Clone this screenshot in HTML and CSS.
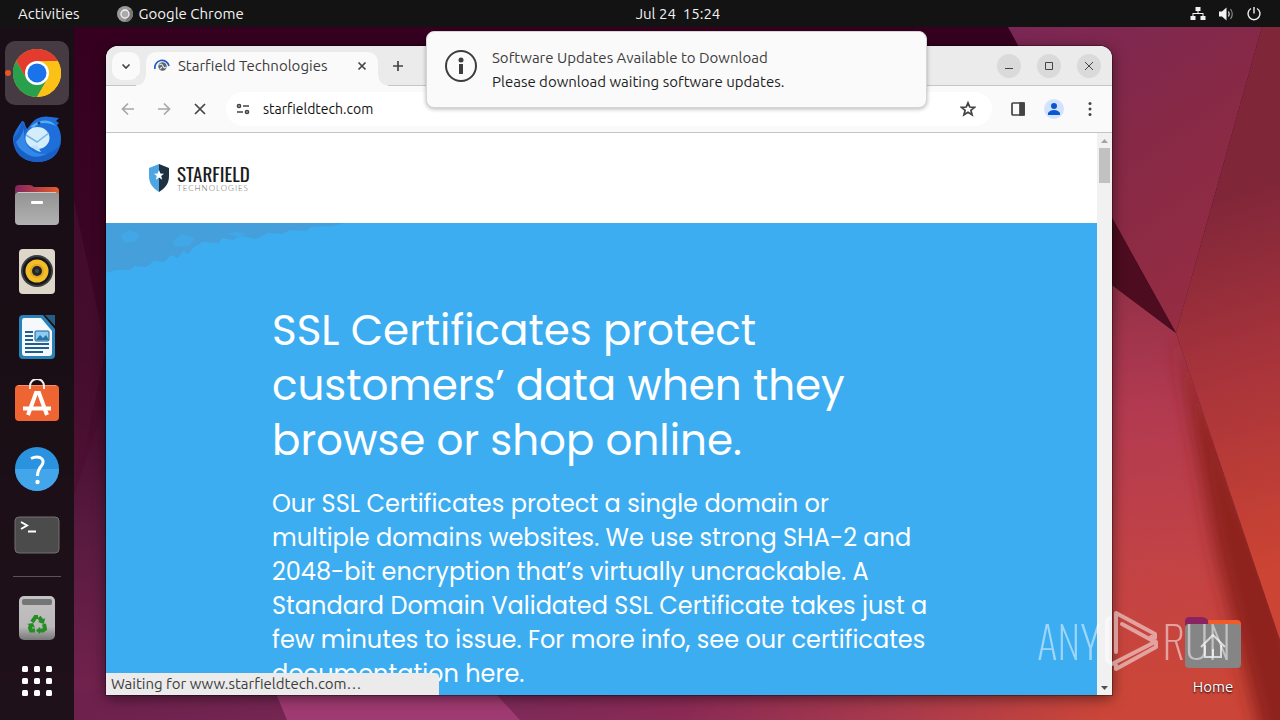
FILE: index.html
```html
<!DOCTYPE html>
<html lang="en">
  <head>
    <meta charset="utf-8" />
    <title>Ubuntu Desktop</title>
    <meta name="viewport" content="width=device-width, initial-scale=1.0" />
    <link rel="stylesheet" href="styles.css">
  </head>

  <body>
    <!-- Wallpaper -->
    <svg class="wallpaper" viewBox="0 0 1280 720" preserveAspectRatio="none" aria-hidden="true">
      <defs>
        <linearGradient id="base" x1="0" y1="0" x2="0" y2="1">
          <stop offset="0" stop-color="#35001f" />
          <stop offset="0.5" stop-color="#3d0827" />
          <stop offset="1" stop-color="#74204c" />
        </linearGradient>
        <linearGradient id="leftEdge" gradientUnits="userSpaceOnUse" x1="0" y1="400" x2="0" y2="720">
          <stop offset="0" stop-color="#440c2d" />
          <stop offset="0.4" stop-color="#581a3f" />
          <stop offset="1" stop-color="#762350" />
        </linearGradient>
        <linearGradient id="floor" gradientUnits="userSpaceOnUse" x1="74" y1="0" x2="1280" y2="0">
          <stop offset="0" stop-color="#6d214c" />
          <stop offset="0.36" stop-color="#7e2a59" />
          <stop offset="0.5" stop-color="#8a2a55" />
          <stop offset="0.68" stop-color="#a83a4c" />
          <stop offset="0.85" stop-color="#c94539" />
          <stop offset="1" stop-color="#a52c18" />
        </linearGradient>
        <linearGradient id="topRight" gradientUnits="userSpaceOnUse" x1="1020" y1="27" x2="1230" y2="330">
          <stop offset="0" stop-color="#7b2755" />
          <stop offset="0.45" stop-color="#872946" />
          <stop offset="1" stop-color="#982d42" />
        </linearGradient>
        <linearGradient id="farRight" gradientUnits="userSpaceOnUse" x1="1190" y1="200" x2="1310" y2="600">
          <stop offset="0" stop-color="#7f2639" />
          <stop offset="0.4" stop-color="#a6333b" />
          <stop offset="0.9" stop-color="#cc4433" />
        </linearGradient>
        <linearGradient id="lower" gradientUnits="userSpaceOnUse" x1="1140" y1="285" x2="1165" y2="690">
          <stop offset="0" stop-color="#943148" />
          <stop offset="0.3" stop-color="#b23a50" />
          <stop offset="0.7" stop-color="#c34345" />
          <stop offset="1" stop-color="#cb4638" />
        </linearGradient>
        <clipPath id="lowerClip">
          <path d="M1100 276 L1176 333 L1280 640 V720 H1100Z" />
        </clipPath>
        <filter id="soft" x="-50%" y="-20%" width="200%" height="140%">
          <feGaussianBlur stdDeviation="9" />
        </filter>
      </defs>
      <rect width="1280" height="720" fill="url(#base)" />
      <path d="M74 200 L106 350 L74 500Z" fill="#4b1233" opacity="0.5" />
      <path d="M74 495 L108 395 V720 H74Z" fill="url(#leftEdge)" />
      <path d="M74 690 H1280 V720 H74Z" fill="url(#floor)" />
      <path d="M262 660 L287 720 H520 L455 650Z" fill="#a03a72" />
      <path d="M1008 27 H1262 L1176 333 L1112 218Z" fill="url(#topRight)" />
      <path d="M1262 27 H1280 V640 L1176 333Z" fill="url(#farRight)" />
      <path d="M1100 276 L1176 333 L1280 640 V720 H1100Z" fill="url(#lower)" />
      <g clip-path="url(#lowerClip)">
        <path d="M1176 333 L1280 590 L1320 740 H1262 L1215 550Z" fill="#8e231b" filter="url(#soft)" />
      </g>
      <path d="M1100 196 L1176 333 L1100 276Z" fill="#4d0c20" />
    </svg>

    <header class="topbar">
      <div class="topbar-left">
        <button class="topbar-button">Activities</button>
        <button class="topbar-button app-menu">
          <svg width="16" height="16" viewBox="0 0 16 16" aria-hidden="true">
            <circle cx="8" cy="8" r="8" fill="#999" />
            <path d="M8 4H15A8 8 0 0 1 8 16L11.5 10Z" fill="#777" />
            <circle cx="8" cy="8" r="4" fill="#aaa" stroke="#f2f2f2" stroke-width="1.3" />
          </svg>
          Google Chrome
        </button>
      </div>
      <button class="topbar-button clock">Jul 24&nbsp; 15:24</button>
      <button class="topbar-button tray" aria-label="System menu">
        <svg width="16" height="16" viewBox="0 0 16 16" fill="#f2f2f2" aria-hidden="true">
          <path d="M5.500 1h5v4h-2v2H13.500v3H15.500v4h-5v-4H12.500v-2H3.500v2H5.500v4H.5v-4H2.500v-3H7.500v-2h-2z" />
        </svg>
        <svg width="16" height="16" viewBox="0 0 16 16" aria-hidden="true">
          <path d="M1 5.500H4L8.500 1.500V14.500L4 10.500H1Z" fill="#f2f2f2" />
          <path d="M10.500 5.500Q12 8 10.500 10.500" fill="none" stroke="#f2f2f2" stroke-width="1.200" />
          <path d="M12.500 3Q16 8 12.500 13" fill="none" stroke="#888" stroke-width="1.200" />
        </svg>
        <svg width="16" height="16" viewBox="0 0 16 16" fill="none" stroke="#f2f2f2" stroke-width="1.400" aria-hidden="true">
          <path d="M5 2.500A6 6 0 1 0 11 2.500M8 1V7.500" />
        </svg>
      </button>
    </header>

    <div class="desktop">
      <nav class="dock" aria-label="Dock">
        <button class="dock-item active" aria-label="Google Chrome">
          <svg width="48" height="48" viewBox="0 0 48 48">
            <circle cx="24" cy="24" r="24" fill="#fbc116" />
            <path d="M3.200 12A24 24 0 0 1 44.800 12H24L13.600 30Z" fill="#e33b2e" />
            <path d="M3.200 12A24 24 0 0 0 24 48L34.400 30H24L13.600 30Z" fill="#29a04b" />
            <path d="M24 12H44.800A24 24 0 0 1 24 48L34.400 30Z" fill="#fbc116" />
            <circle cx="24" cy="24" r="12" fill="#fff" />
            <circle cx="24" cy="24" r="9.500" fill="#1a73e8" />
          </svg>
        </button>
        <button class="dock-item" aria-label="Thunderbird">
          <svg width="48" height="48" viewBox="0 0 48 48">
            <path d="M18 9C22 3 30 0 38 2L46 3L43 6L46 8L44 10C48 16 49 24 47 31C44 42 35 47 25 47C10 47 0 38 0 23C1 17 5 12 9 6C11 6 12 8 12 10L14 14Z" fill="#1e6fd9" />
            <path d="M1 22C0 38 10 47 25 47C38 47 46 38 48 27C43 38 31 41 21 38C9 34 8 22 13 14L9 6Q7 19 1 22Z" fill="#195fc6" />
            <path d="M3 27Q9 21 11 13Q10 28 17 34Q25 41 35 38Q22 46 11 37Q5 33 3 27Z" fill="#3389e8" />
            <path d="M17 12C25 4 37 3 43 11C32 6 25 8 21 13Z" fill="#55acf7" />
            <ellipse cx="24.500" cy="23" rx="12" ry="11" fill="#d3edfc" />
            <path d="M13 20L24 27L36 18" fill="none" stroke="#76b5e1" stroke-width="1.500" />
            <path d="M18 31Q22 36 28 37L24 30Z" fill="#bfe2f8" />
            <circle cx="26" cy="8" r="1.500" fill="#163f86" />
          </svg>
        </button>
        <button class="dock-item" aria-label="Files">
          <svg width="48" height="48" viewBox="0 0 48 48">
            <defs>
              <linearGradient id="folderBack"><stop stop-color="#812460" /><stop offset="1" stop-color="#e95b29" /></linearGradient>
              <linearGradient id="folderFront" x2="0" y2="1"><stop stop-color="#929292" /><stop offset="1" stop-color="#b2b2b2" /></linearGradient>
            </defs>
            <path d="M2 8Q2 4 6 4H16Q19 4 21 6H42Q46 6 46 10V24H2Z" fill="url(#folderBack)" />
            <rect x="2" y="11" width="44" height="33" rx="4" fill="url(#folderFront)" />
            <path d="M5 11.500H43" stroke="#c8c8c8" />
            <rect x="18" y="20" width="12" height="3" rx="1" fill="#fff" />
          </svg>
        </button>
        <button class="dock-item" aria-label="Rhythmbox">
          <svg width="48" height="48" viewBox="0 0 48 48">
            <rect x="6" y="2" width="36" height="45" rx="4" fill="#ddd7ca" />
            <circle cx="24" cy="24" r="16" fill="#3b3c42" />
            <circle cx="24" cy="24" r="14" fill="#15171d" />
            <circle cx="24" cy="24" r="11.500" fill="#f2bd26" />
            <circle cx="24" cy="24" r="7" fill="#dba822" />
            <circle cx="24" cy="24" r="5" fill="#22242a" />
            <circle cx="24" cy="24" r="2" fill="#44464f" />
          </svg>
        </button>
        <button class="dock-item" aria-label="LibreOffice Writer">
          <svg width="48" height="48" viewBox="0 0 48 48">
            <path d="M10 2H30L42 16V42Q42 46 38 46H10Q6 46 6 42V6Q6 2 10 2Z" fill="#2982b7" />
            <path d="M11 5H28L39 18V40Q39 43 36 43H12Q9 43 9 40V8Q9 5 11 5Z" fill="#f5f9fc" />
            <path d="M32 2H42V13Z" fill="#245d86" />
            <path d="M12 19H20M12 23H20M12 27H20M12 31H36M12 35H36M12 39H30" stroke="#205f91" stroke-width="2" />
            <rect x="22" y="18" width="14" height="10" rx="1" fill="#8dccf0" stroke="#205f91" />
            <path d="M23 27L27 22L30 25L33 22L36 27Z" fill="#2674a8" />
          </svg>
        </button>
        <button class="dock-item" aria-label="Ubuntu Software">
          <svg width="48" height="48" viewBox="0 0 48 48">
            <rect x="2" y="6" width="44" height="36" rx="4" fill="#ee6533" />
            <path d="M5 6.500H43" stroke="#fa9069" />
            <path d="M17 10V7A7 7 0 0 1 31 7V10" fill="none" stroke="#f8eee9" stroke-width="2" />
            <path d="M15 36L23 14H26L34 36" fill="none" stroke="#fff" stroke-width="4" />
            <path d="M10 29.500H38" stroke="#fff" stroke-width="4" />
          </svg>
        </button>
        <button class="dock-item" aria-label="Help">
          <svg width="48" height="48" viewBox="0 0 48 48">
            <circle cx="24" cy="24" r="22" fill="#2b92e0" />
            <path d="M2 24A22 22 0 0 0 46 24Z" fill="#43a6ea" />
            <path d="M18 13.500Q23 11 27 12.500Q32 15 29 20Q24.500 25 24.500 31" fill="none" stroke="#fff" stroke-width="3" />
            <circle cx="24.500" cy="37" r="2.200" fill="#fff" />
          </svg>
        </button>
        <button class="dock-item" aria-label="Terminal">
          <svg width="48" height="48" viewBox="0 0 48 48">
            <rect x="2" y="6" width="44" height="36" rx="4" fill="#4b4b4b" stroke="#707070" />
            <path d="M8 11L14 14.500L8 18M15 20.500H23" fill="none" stroke="#fff" stroke-width="2" />
          </svg>
        </button>
        <hr class="dock-divider" />
        <button class="dock-item" aria-label="Trash">
          <svg width="48" height="48" viewBox="0 0 48 48">
            <defs><linearGradient id="bin" x2="0" y2="1"><stop stop-color="#c3c2c2" /><stop offset="0.7" stop-color="#bab8b8" /><stop offset="1" stop-color="#777" /></linearGradient></defs>
            <rect x="6" y="2" width="36" height="44" rx="5" fill="url(#bin)" />
            <rect x="9" y="5" width="30" height="6" rx="2" fill="#757575" />
            <g fill="none" stroke="#248d24" stroke-width="4">
              <path d="M19 28L22.500 23H25" /><path d="M26 23L29.500 28" />
              <path d="M31 30L32 35L30 36.500H26" /><path d="M22 36.500H18L17 34L18 31" />
            </g>
            <path d="M32 24L31 30L25 28ZM27 33V40L23 36.500ZM14 30L20 29L22 34Z" fill="#248d24" />
          </svg>
        </button>
        <button class="dock-item apps" aria-label="Show Applications">
          <svg width="32" height="32" viewBox="0 0 32 32" fill="#fff">
            <rect x="1" y="1" width="6" height="6" rx="1.500" /><rect x="13" y="1" width="6" height="6" rx="1.500" /><rect x="25" y="1" width="6" height="6" rx="1.500" />
            <rect x="1" y="13" width="6" height="6" rx="1.500" /><rect x="13" y="13" width="6" height="6" rx="1.500" /><rect x="25" y="13" width="6" height="6" rx="1.500" />
            <rect x="1" y="25" width="6" height="6" rx="1.500" /><rect x="13" y="25" width="6" height="6" rx="1.500" /><rect x="25" y="25" width="6" height="6" rx="1.500" />
          </svg>
        </button>
      </nav>

      <main class="workspace">
        <button class="home-icon">
          <svg width="56" height="54" viewBox="0 0 56 54" aria-hidden="true">
            <path d="M0 5Q0 1 4 1H17Q21 1 23 4H52Q56 4 56 8V25H0Z" fill="#f15b2a" />
            <path d="M0 5Q0 1 4 1H17Q21 1 23 4L24 20H0Z" fill="#8a2360" />
            <rect y="8" width="56" height="44" rx="4" fill="#858585" />
            <path d="M16 31L28 19L40 31M20 29V41H36V29M28 41V33" fill="none" stroke="#d9d9d9" stroke-width="2" />
          </svg>
          Home
        </button>

        <section class="window" aria-label="Starfield Technologies - Google Chrome">
          <div class="titlebar">
            <button class="tab-search" aria-label="Search tabs">
              <svg width="16" height="16" viewBox="0 0 16 16"><path d="M4.500 6.500L8 10L11.500 6.500" /></svg>
            </button>
            <div class="tab">
              <svg class="spinner" width="16" height="16" viewBox="0 0 16 16" aria-hidden="true">
                <path d="M1 11A7 7 0 1 1 15 8" stroke="#2458c5" />
                <circle cx="8.500" cy="8.500" r="4.200" fill="#5d6470" stroke="none" />
                <path d="M5.500 7Q8 5 9 8T12 9M6 11L8 9" stroke="#dfe3e8" stroke-width="1.200" />
              </svg>
              <span class="tab-title">Starfield Technologies</span>
              <button class="icon-button small" aria-label="Close tab">
                <svg width="16" height="16" viewBox="0 0 16 16"><path d="M4.500 4.500L11.500 11.500M11.500 4.500L4.500 11.500" /></svg>
              </button>
            </div>
            <button class="icon-button new-tab" aria-label="New tab">
              <svg width="16" height="16" viewBox="0 0 16 16"><path d="M8 3V13M3 8H13" /></svg>
            </button>
            <div class="window-controls">
              <button aria-label="Minimize"><svg width="16" height="16" viewBox="0 0 16 16"><path d="M4 10.500H12" /></svg></button>
              <button aria-label="Maximize"><svg width="16" height="16" viewBox="0 0 16 16"><path d="M4.500 4.500H11.500V11.500H4.500Z" /></svg></button>
              <button aria-label="Close"><svg width="16" height="16" viewBox="0 0 16 16"><path d="M4 4L12 12M12 4L4 12" /></svg></button>
            </div>
          </div>

          <div class="toolbar">
            <button class="icon-button muted" aria-label="Back">
              <svg width="16" height="16" viewBox="0 0 16 16"><path d="M14 8H3M8 2.500L2.500 8L8 13.500" /></svg>
            </button>
            <button class="icon-button muted" aria-label="Forward">
              <svg width="16" height="16" viewBox="0 0 16 16"><path d="M2 8H13M8 2.500L13.500 8L8 13.500" /></svg>
            </button>
            <button class="icon-button" aria-label="Stop loading">
              <svg width="16" height="16" viewBox="0 0 16 16"><path d="M3 3L13 13M13 3L3 13" /></svg>
            </button>
            <div class="omnibox">
              <button class="icon-button small" aria-label="View site information">
                <svg width="16" height="16" viewBox="0 0 16 16"><circle cx="4" cy="5" r="1.500" /><path d="M8 5H14M2 11H8" /><circle cx="12" cy="11" r="1.500" /></svg>
              </button>
              <input class="url" type="text" aria-label="Address" value="starfieldtech.com" />
              <button class="icon-button small" aria-label="Bookmark this tab">
                <svg width="16" height="16" viewBox="0 0 16 16"><path d="M8 1.800L9.800 6L14.500 6.300L10.900 9.300L12.100 13.800L8 11.300L3.900 13.800L5.100 9.300L1.500 6.300L6.200 6Z" /></svg>
              </button>
            </div>
            <div class="toolbar-end">
              <button class="icon-button small" aria-label="Side panel">
                <svg width="16" height="16" viewBox="0 0 16 16"><rect x="2" y="2" width="12" height="12" rx="1" /><path d="M10 2H14V14H10Z" fill="#444" /></svg>
              </button>
              <button class="icon-button small profile" aria-label="You">
                <svg width="20" height="20" viewBox="0 0 20 20"><circle cx="10" cy="10" r="10" fill="#d3e3fd" /><circle cx="10" cy="7" r="3" fill="#0b57d0" /><path d="M4 16V14Q6 11 10 11T16 14V16Z" fill="#0b57d0" /></svg>
              </button>
              <button class="icon-button small" aria-label="Menu">
                <svg class="dots" width="16" height="16" viewBox="0 0 16 16"><circle cx="8" cy="2.500" r="1.500" /><circle cx="8" cy="8" r="1.500" /><circle cx="8" cy="13.500" r="1.500" /></svg>
              </button>
            </div>
          </div>

          <div class="viewport">
            <div class="page">
              <header class="site-header">
                <a class="logo" href="#">
                  <svg width="20" height="28" viewBox="0 0 20 28" aria-hidden="true">
                    <path d="M10 0L0 4V12C0 20 4 24 10 28Z" fill="#4da6e3" />
                    <path d="M10 0L20 4V12C20 20 16 24 10 28Z" fill="#1c3242" />
                    <path d="M10 6L11.400 9.500L15 9.700L12.200 12L13.200 15.700L10 13.600L6.800 15.700L7.800 12L5 9.700L8.600 9.500Z" fill="#fff" />
                  </svg>
                  <span class="logo-text">
                    <span class="logo-name">STARFIELD</span>
                    <span class="logo-sub">TECHNOLOGIES</span>
                  </span>
                </a>
              </header>
              <div class="hero">
                <svg class="brush" width="240" height="52" viewBox="0 0 240 52" aria-hidden="true">
                  <path d="M0 0H238L226 3L205 4L200 8L184 7L176 11L162 10L150 16L134 13L127 17L116 15L113 20L97 19L88 24L82 31L77 28L72 35L65 32L58 39L48 38L40 44L29 43L24 47L10 47L0 50Z" fill="#459fda" />
                  <path d="M15 12L24 7L34 12L30 18L18 20ZM66 19L76 11L89 15L83 23L70 24ZM122 11L131 8L140 12L132 15Z" fill="#41a7e6" />
                </svg>
                <div class="hero-content">
                  <h1>SSL Certificates protect<br />customers’ data when they<br />browse or shop online.</h1>
                  <p>
                    Our SSL Certificates protect a single domain or<br />
                    multiple domains websites. We use strong SHA-2 and<br />
                    2048-bit encryption that’s virtually uncrackable. A<br />
                    Standard Domain Validated SSL Certificate takes just a<br />
                    few minutes to issue. For more info, see our certificates<br />
                    documentation here.
                  </p>
                </div>
              </div>
            </div>
            <div class="scrollbar" aria-hidden="true">
              <svg width="15" height="15" viewBox="0 0 15 15"><path d="M4 10L7.500 6L11 10Z" fill="#a3a3a3" /></svg>
              <div class="thumb"></div>
              <svg class="scroll-down" width="15" height="15" viewBox="0 0 15 15"><path d="M4 6L7.500 10L11 6Z" fill="#505050" /></svg>
            </div>
            <div class="status">Waiting for www.starfieldtech.com…</div>
          </div>
        </section>
      </main>
    </div>

    <div class="notification" role="status">
      <svg width="32" height="32" viewBox="0 0 32 32" aria-hidden="true">
        <circle cx="16" cy="16" r="15" fill="none" stroke="#3d3d3d" stroke-width="2" />
        <circle cx="16" cy="10" r="2.500" fill="#3d3d3d" />
        <path d="M14 14H18V24H14Z" fill="#3d3d3d" />
      </svg>
      <div>
        <div class="notification-title">Software Updates Available to Download</div>
        <div class="notification-body">Please download waiting software updates.</div>
      </div>
    </div>

    <div class="watermark">
      <span>ANY</span>
      <svg width="54" height="62" viewBox="0 0 54 62" fill="none" stroke="#fff" stroke-width="4" stroke-linejoin="round" stroke-linecap="round" aria-hidden="true">
        <path d="M5 8L2 10V50L7 54L50 32L17 14" />
        <path d="M11 42V3L50 24V28L46 27" />
        <path d="M11 55V59L51 37V32" />
      </svg>
      <span>RUN</span>
    </div>
  </body>
</html>
```
FILE: styles.css
```css
* {
  box-sizing: border-box;
}

body {
  display: flex;
  flex-direction: column;
  height: 100vh;
  margin: 0;
  overflow: hidden;
  background-color: #35001f;
  color: #3d3d3d;
  font-family: Ubuntu, "Noto Sans", sans-serif;
  font-size: 15px;
}

button {
  display: flex;
  align-items: center;
  justify-content: center;
  padding: 0;
  border: none;
  background: none;
  color: inherit;
  font: inherit;
}

svg {
  display: block;
  flex: none;
}

.wallpaper {
  position: absolute;
  inset: 0;
  width: 100%;
  height: 100%;
  z-index: -1;
}

/* Top panel */
.topbar {
  display: grid;
  grid-template-columns: 1fr auto 1fr;
  align-items: center;
  height: 27px;
  padding: 0 18px;
  background-color: #131313;
  color: #f2f2f2;
}

.topbar-left {
  display: flex;
  gap: 37px;
}

.topbar-button {
  gap: 6px;
}

.clock {
  margin-left: 76px;
}

.tray {
  justify-self: end;
  gap: 12px;
}

.desktop {
  display: flex;
  flex: 1;
  min-height: 0;
}

/* Dock */
.dock {
  display: flex;
  flex-direction: column;
  align-items: center;
  gap: 2px;
  width: 74px;
  padding-top: 14px;
  background-color: rgba(22, 16, 20, 0.9);
}

.dock-item {
  position: relative;
  flex: none;
  width: 64px;
  height: 64px;
  border-radius: 10px;
}

.dock-item.active {
  background-color: #463b42;
}

.dock-item.active::before {
  content: "";
  position: absolute;
  left: 0;
  width: 6px;
  height: 6px;
  border-radius: 3px;
  background-color: #e95420;
}

.dock-item.apps {
  height: 58px;
}

.dock-divider {
  width: 48px;
  height: 1px;
  margin: 7px 0;
  border: none;
  background-color: #5b5358;
}

.workspace {
  position: relative;
  flex: 1;
}

.home-icon {
  position: absolute;
  right: 36px;
  bottom: 25px;
  flex-direction: column;
  gap: 8px;
  width: 62px;
  color: white;
  text-shadow: 0 1px 2px #000;
}

/* Browser window */
.window {
  position: absolute;
  top: 19px;
  right: 168px;
  bottom: 25px;
  left: 32px;
  display: flex;
  flex-direction: column;
  overflow: hidden;
  border-radius: 12px 12px 0 0;
  background-color: white;
  box-shadow: 0 0 0 1px rgba(0, 0, 0, 0.3), 0 3px 14px rgba(0, 0, 0, 0.5);
}

.window button svg,
.spinner {
  fill: none;
  stroke: #444;
  stroke-width: 1.7;
}

.titlebar {
  display: flex;
  align-items: center;
  height: 40px;
  padding: 0 11px 0 6px;
  background-color: #ebebeb;
  box-shadow: inset 0 -1px #c6c6c6;
}

.tab-search {
  width: 28px;
  height: 28px;
  border-radius: 10px;
  background-color: #fafafa;
}

.tab {
  position: relative;
  display: flex;
  align-items: center;
  align-self: flex-end;
  gap: 8px;
  width: 232px;
  height: 34px;
  margin-left: 6px;
  padding: 0 8px 7px;
  border-radius: 10px 10px 0 0;
  background-color: #fafafa;
}

.tab::before,
.tab::after {
  content: "";
  position: absolute;
  bottom: 0;
  width: 10px;
  height: 10px;
}

.tab::before {
  right: 100%;
  background: radial-gradient(circle at 0 0, #ebebeb 9px, #fafafa 10px);
}

.tab::after {
  left: 100%;
  background: radial-gradient(circle at 100% 0, #ebebeb 9px, #fafafa 10px);
}

.tab-title {
  flex: 1;
  white-space: nowrap;
}

.icon-button {
  flex: none;
  width: 36px;
  height: 28px;
}

.icon-button.small {
  width: 16px;
}

.muted {
  opacity: 0.45;
}

.new-tab {
  margin-left: 2px;
}

.window-controls {
  display: flex;
  gap: 16px;
  margin-left: auto;
}

.window-controls button {
  width: 24px;
  height: 24px;
  border-radius: 50%;
  background-color: #dadada;
}

.window .window-controls svg {
  stroke-width: 1;
}

.toolbar {
  display: flex;
  align-items: center;
  height: 47px;
  padding: 0 14px 0 4px;
  border-bottom: 1px solid #c4c4c4;
  background-color: #fafafa;
}

.omnibox {
  display: flex;
  flex: 1;
  align-items: center;
  gap: 12px;
  height: 34px;
  margin-left: 8px;
  padding: 0 16px 0 9px;
  border-radius: 17px;
  background-color: white;
}

.url {
  flex: 1;
  min-width: 0;
  padding: 0;
  border: none;
  outline: none;
  background: none;
  color: #111;
  font: inherit;
  font-size: 14px;
}

.toolbar-end {
  display: flex;
  gap: 20px;
  margin-left: 18px;
}

.window .profile svg {
  stroke: none;
}

.window .dots {
  fill: #444;
  stroke: none;
}

.viewport {
  position: relative;
  display: flex;
  flex: 1;
  min-height: 0;
}

.page {
  flex: 1;
  min-width: 0;
  overflow: hidden;
  background-color: #3dadf2;
}

.scrollbar {
  display: flex;
  flex-direction: column;
  align-items: center;
  width: 15px;
  background-color: #f1f1f1;
}

.thumb {
  width: 11px;
  height: 35px;
  background-color: #c1c1c1;
}

.scroll-down {
  margin-top: auto;
}

.status {
  position: absolute;
  bottom: 0;
  left: 0;
  width: 333px;
  height: 22px;
  padding-left: 5px;
  border-top-right-radius: 4px;
  background-color: #ebebeb;
  line-height: 22px;
}

/* Starfield page */
.site-header {
  display: flex;
  align-items: center;
  height: 90px;
  padding-left: 43px;
  background-color: white;
}

.logo {
  display: flex;
  align-items: center;
  gap: 8px;
  text-decoration: none;
}

.logo-text {
  display: flex;
  flex-direction: column;
}

.logo-name {
  color: #1b1b1b;
  font-family: Oswald, "Roboto Condensed", "Liberation Sans Narrow", sans-serif;
  font-size: 19px;
  font-weight: 400;
  line-height: 20px;
}

.logo-sub {
  color: #666;
  font-family: Lato, sans-serif;
  font-size: 8px;
  font-weight: 300;
  letter-spacing: 1px;
  line-height: 10px;
}

.hero {
  position: relative;
  color: white;
  font-family: Poppins, Inter, sans-serif;
}

.brush {
  position: absolute;
  top: 0;
  left: 0;
}

.hero-content {
  padding: 80px 0 0 166px;
  white-space: nowrap;
}

h1 {
  margin: 0 0 19px;
  font-size: 42px;
  font-weight: 400;
  line-height: 55px;
}

.hero p {
  margin: 0;
  font-size: 24px;
  line-height: 34px;
}

/* Notification bubble */
.notification {
  position: absolute;
  top: 31px;
  left: 50%;
  display: flex;
  gap: 15px;
  width: 501px;
  height: 77px;
  margin-left: -214px;
  padding: 14px 18px;
  border: 1px solid #d5d5d5;
  border-radius: 8px;
  background-color: #fafafa;
  box-shadow: 0 1px 4px rgba(0, 0, 0, 0.3);
  line-height: 24px;
}

.notification svg {
  margin-top: 4px;
}

.notification-body {
  color: #1f1f1f;
}

.watermark {
  position: absolute;
  right: 49px;
  bottom: 48px;
  display: flex;
  align-items: center;
  gap: 4px;
  color: white;
  font-family: Oswald, "Roboto Condensed", "Liberation Sans Narrow", sans-serif;
  font-size: 44px;
  font-weight: 200;
  line-height: 62px;
  opacity: 0.5;
  pointer-events: none;
}
```
